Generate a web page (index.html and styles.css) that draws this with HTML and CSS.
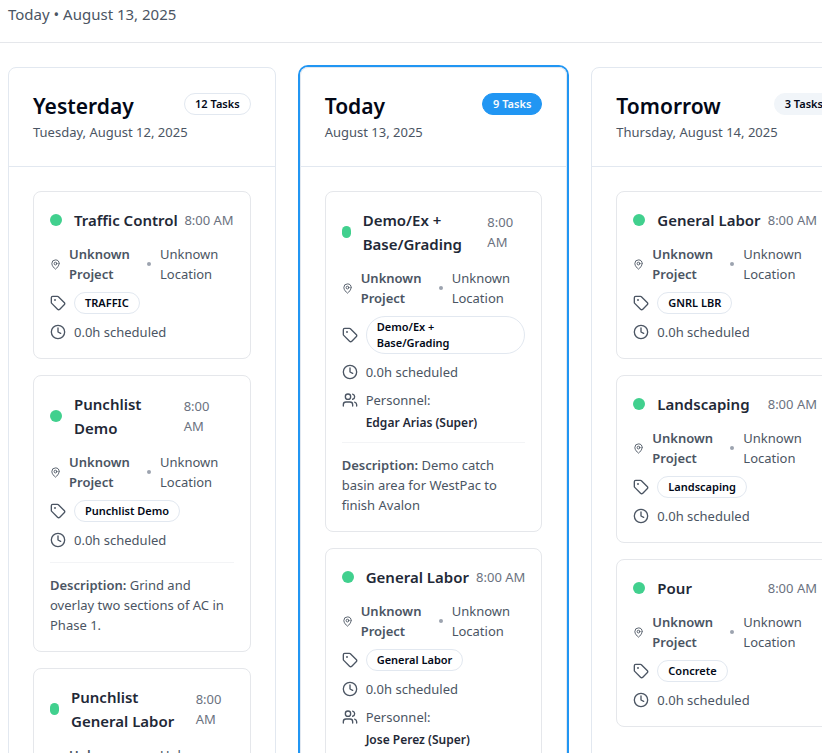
FILE: index.html
```
<!DOCTYPE html>
<html lang="en">
<head>
<meta charset="utf-8">
<meta name="viewport" content="width=device-width, initial-scale=1">
<title>Schedule</title>
<link rel="stylesheet" href="styles.css">
</head>
<body>
<svg class="sprite" aria-hidden="true">
  <symbol id="pin" viewBox="0 0 24 24"><path d="M20 10c0 4.993-5.539 10.193-7.399 11.799a1 1 0 0 1-1.202 0C9.539 20.193 4 14.993 4 10a8 8 0 0 1 16 0"/><circle cx="12" cy="10" r="3"/></symbol>
  <symbol id="tag" viewBox="0 0 24 24"><path d="M12.586 2.586A2 2 0 0 0 11.172 2H4a2 2 0 0 0-2 2v7.172a2 2 0 0 0 .586 1.414l8.704 8.704a2.426 2.426 0 0 0 3.42 0l6.58-6.58a2.426 2.426 0 0 0 0-3.42z"/><circle class="tag-hole" cx="7.5" cy="7.5" r=".5"/></symbol>
  <symbol id="clock" viewBox="0 0 24 24"><circle cx="12" cy="12" r="10"/><path d="M12 6v6l4 2"/></symbol>
  <symbol id="users" viewBox="0 0 24 24"><path d="M16 21v-2a4 4 0 0 0-4-4H6a4 4 0 0 0-4 4v2"/><circle cx="9" cy="7" r="4"/><path d="M22 21v-2a4 4 0 0 0-3-3.87M16 3.13a4 4 0 0 1 0 7.75"/></symbol>
</svg>

<header class="page-header"><p>Today • August 13, 2025</p></header>

<main class="board-scroll">
<div class="board">
  <section class="column">
    <header class="column-header">
      <div class="column-top"><h2>Yesterday</h2><span class="badge">12 Tasks</span></div>
      <p>Tuesday, August 12, 2025</p>
    </header>
    <div class="tasks">
      <article class="task">
        <div class="task-top"><span class="dot"></span><h3>Traffic Control</h3><time>8:00 AM</time></div>
        <div class="place"><svg class="icon"><use href="#pin"/></svg><strong>Unknown Project</strong><span class="separator"></span><span>Unknown Location</span></div>
        <div class="row"><svg class="icon"><use href="#tag"/></svg><span class="badge">TRAFFIC</span></div>
        <div class="row"><svg class="icon"><use href="#clock"/></svg><span>0.0h scheduled</span></div>
      </article>
      <article class="task">
        <div class="task-top"><span class="dot"></span><h3>Punchlist<br>Demo</h3><time class="stacked">8:00 AM</time></div>
        <div class="place"><svg class="icon"><use href="#pin"/></svg><strong>Unknown Project</strong><span class="separator"></span><span>Unknown Location</span></div>
        <div class="row"><svg class="icon"><use href="#tag"/></svg><span class="badge">Punchlist Demo</span></div>
        <div class="row"><svg class="icon"><use href="#clock"/></svg><span>0.0h scheduled</span></div>
        <p class="description"><strong>Description:</strong> Grind and overlay two sections of AC in Phase 1.</p>
      </article>
      <article class="task">
        <div class="task-top"><span class="dot dot-narrow"></span><h3>Punchlist<br>General Labor</h3><time class="stacked-narrow">8:00 AM</time></div>
        <div class="place"><svg class="icon"><use href="#pin"/></svg><strong>Unknown Project</strong><span class="separator"></span><span>Unknown Location</span></div>
      </article>
    </div>
  </section>

  <section class="column current">
    <header class="column-header">
      <div class="column-top"><h2>Today</h2><span class="badge badge-primary">9 Tasks</span></div>
      <p>August 13, 2025</p>
    </header>
    <div class="tasks">
      <article class="task">
        <div class="task-top"><span class="dot dot-narrow"></span><h3>Demo/Ex +<br>Base/Grading</h3><time class="stacked-narrow">8:00 AM</time></div>
        <div class="place"><svg class="icon"><use href="#pin"/></svg><strong>Unknown Project</strong><span class="separator"></span><span>Unknown Location</span></div>
        <div class="row"><svg class="icon"><use href="#tag"/></svg><span class="badge badge-block">Demo/Ex +<br>Base/Grading</span></div>
        <div class="row"><svg class="icon"><use href="#clock"/></svg><span>0.0h scheduled</span></div>
        <div class="row"><svg class="icon"><use href="#users"/></svg><span>Personnel:</span></div>
        <p class="person">Edgar Arias (Super)</p>
        <p class="description"><strong>Description:</strong> Demo catch basin area for WestPac to finish Avalon</p>
      </article>
      <article class="task">
        <div class="task-top"><span class="dot"></span><h3>General Labor</h3><time>8:00 AM</time></div>
        <div class="place"><svg class="icon"><use href="#pin"/></svg><strong>Unknown Project</strong><span class="separator"></span><span>Unknown Location</span></div>
        <div class="row"><svg class="icon"><use href="#tag"/></svg><span class="badge">General Labor</span></div>
        <div class="row"><svg class="icon"><use href="#clock"/></svg><span>0.0h scheduled</span></div>
        <div class="row"><svg class="icon"><use href="#users"/></svg><span>Personnel:</span></div>
        <p class="person">Jose Perez (Super)</p>
      </article>
    </div>
  </section>

  <section class="column">
    <header class="column-header">
      <div class="column-top"><h2>Tomorrow</h2><span class="badge badge-muted">3 Tasks</span></div>
      <p>Thursday, August 14, 2025</p>
    </header>
    <div class="tasks">
      <article class="task">
        <div class="task-top"><span class="dot"></span><h3>General Labor</h3><time>8:00 AM</time></div>
        <div class="place"><svg class="icon"><use href="#pin"/></svg><strong>Unknown Project</strong><span class="separator"></span><span>Unknown Location</span></div>
        <div class="row"><svg class="icon"><use href="#tag"/></svg><span class="badge">GNRL LBR</span></div>
        <div class="row"><svg class="icon"><use href="#clock"/></svg><span>0.0h scheduled</span></div>
      </article>
      <article class="task">
        <div class="task-top"><span class="dot"></span><h3>Landscaping</h3><time>8:00 AM</time></div>
        <div class="place"><svg class="icon"><use href="#pin"/></svg><strong>Unknown Project</strong><span class="separator"></span><span>Unknown Location</span></div>
        <div class="row"><svg class="icon"><use href="#tag"/></svg><span class="badge">Landscaping</span></div>
        <div class="row"><svg class="icon"><use href="#clock"/></svg><span>0.0h scheduled</span></div>
      </article>
      <article class="task">
        <div class="task-top"><span class="dot"></span><h3>Pour</h3><time>8:00 AM</time></div>
        <div class="place"><svg class="icon"><use href="#pin"/></svg><strong>Unknown Project</strong><span class="separator"></span><span>Unknown Location</span></div>
        <div class="row"><svg class="icon"><use href="#tag"/></svg><span class="badge">Concrete</span></div>
        <div class="row"><svg class="icon"><use href="#clock"/></svg><span>0.0h scheduled</span></div>
      </article>
    </div>
  </section>
</div>
</main>
</body>
</html>
```
FILE: styles.css
```
* { box-sizing: border-box; }

body {
  margin: 0;
  height: 100vh;
  overflow: hidden;
  display: flex;
  flex-direction: column;
  background: #fff;
  color: #4b5563;
  font: 13px/20px "Segoe UI", "Noto Sans", sans-serif;
}

h2, h3, p { margin: 0; }

strong { font-weight: 600; }

.sprite { display: none; }

.page-header {
  flex: none;
  padding: 2px 8px 16px;
  border-bottom: 1px solid #e5e7eb;
  font-size: 15px;
  line-height: 24px;
}

.board-scroll {
  flex: 1;
  min-height: 0;
  overflow: auto;
  scrollbar-width: none;
}

.board {
  min-width: 867px;
  display: grid;
  grid-template-columns: repeat(3, 1fr);
  gap: 24px;
  padding: 24px 8px;
}

.column {
  border: 1px solid #e2e8f0;
  border-radius: 8px;
}

.current { box-shadow: 0 0 0 2px #2196f3; }

.column-header {
  padding: 24px;
  border-bottom: 1px solid #e2e8f0;
}

.column-top {
  display: flex;
  align-items: center;
  justify-content: space-between;
  height: 28px;
  margin-bottom: 2px;
}

.column-top .badge { margin-bottom: 4px; }

h2 {
  color: #020817;
  font-size: 21px;
  line-height: 28px;
  font-weight: 600;
}

.badge {
  padding: 2px 10px;
  border: 1px solid #e2e8f0;
  border-radius: 20px;
  color: #020817;
  font-size: 11px;
  line-height: 16px;
  font-weight: 600;
  white-space: nowrap;
}

.badge-block { flex: 1; }

.badge-primary {
  background: #2196f3;
  border-color: #2196f3;
  color: #f8fafc;
}

.badge-muted {
  background: #f1f5f9;
  border-color: #f1f5f9;
}

.tasks {
  display: grid;
  gap: 16px;
  padding: 24px;
}

.task {
  display: grid;
  gap: 8px;
  padding: 16px;
  border: 1px solid #e5e7eb;
  border-radius: 8px;
}

.task-top {
  display: flex;
  align-items: center;
  gap: 12px;
  margin-bottom: 4px;
}

.task-top h3 {
  flex: 1;
  color: #1f2937;
  font-size: 15px;
  line-height: 24px;
  font-weight: 600;
  white-space: nowrap;
}

.task-top time {
  margin-left: -8px;
  color: #6b7280;
  white-space: nowrap;
}

.task-top .stacked,
.task-top .stacked-narrow {
  width: 50px;
  margin-left: 0;
  padding-right: 16px;
  white-space: normal;
}

.task-top .stacked-narrow {
  width: 38px;
  padding-right: 4px;
}

.dot {
  flex: none;
  width: 12px;
  height: 12px;
  border-radius: 6px;
  background: #41d08e;
}

.dot-narrow { width: 9px; }

.place {
  display: grid;
  grid-template-columns: 11px 70px 5px 1fr;
  column-gap: 8px;
  align-items: center;
}

.separator {
  width: 4px;
  height: 4px;
  border-radius: 2px;
  background: #9ca3af;
}

.row {
  display: flex;
  align-items: center;
  gap: 8px;
}

.icon {
  flex: none;
  width: 16px;
  height: 16px;
  fill: none;
  stroke: currentColor;
  stroke-width: 2;
  stroke-linecap: round;
  stroke-linejoin: round;
}

.place .icon {
  width: 11px;
  height: 11px;
}

.tag-hole { fill: currentColor; }

.person {
  margin: -4px 0 -2px 24px;
  color: #1f2937;
  font-size: 12px;
  line-height: 18px;
  font-weight: 600;
}

.description {
  margin-top: 4px;
  padding-top: 12px;
  border-top: 1px solid #f3f4f6;
}
```
